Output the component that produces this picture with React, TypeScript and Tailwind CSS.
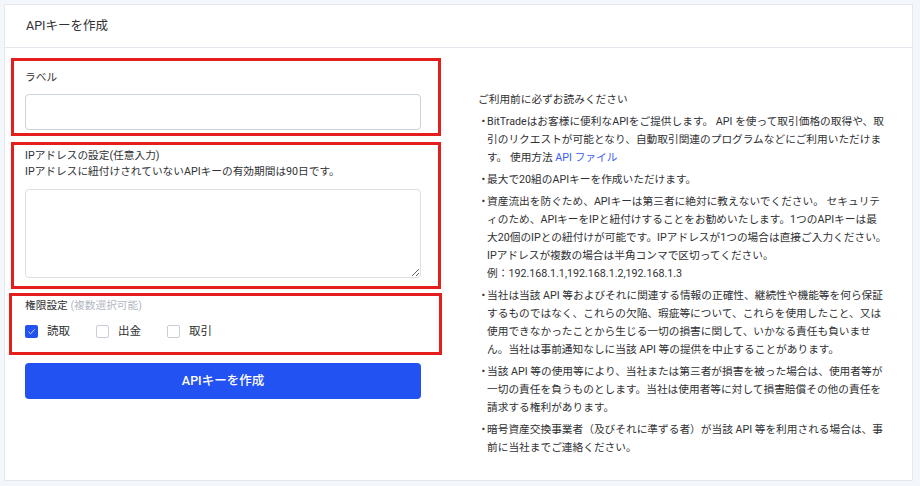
const notes: { lines: React.ReactNode[] }[] = [
  {
    lines: [
      "BitTradeはお客様に便利なAPIをご提供します。 API を使って取引価格の取得や、取",
      "引のリクエストが可能となり、自動取引関連のプログラムなどにご利用いただけま",
      <>
        す。 使用方法 <span className="text-[#3d5cf6]">API ファイル</span>
      </>,
    ],
  },
  { lines: ["最大で20組のAPIキーを作成いただけます。"] },
  {
    lines: [
      "資産流出を防ぐため、APIキーは第三者に絶対に教えないでください。 セキュリテ",
      "ィのため、APIキーをIPと紐付けすることをお勧めいたします。1つのAPIキーは最",
      "大20個のIPとの紐付けが可能です。IPアドレスが1つの場合は直接ご入力ください。",
      "IPアドレスが複数の場合は半角コンマで区切ってください。",
      "例：192.168.1.1,192.168.1.2,192.168.1.3",
    ],
  },
  {
    lines: [
      "当社は当該 API 等およびそれに関連する情報の正確性、継続性や機能等を何ら保証",
      "するものではなく、これらの欠陥、瑕疵等について、これらを使用したこと、又は",
      "使用できなかったことから生じる一切の損害に関して、いかなる責任も負いませ",
      "ん。当社は事前通知なしに当該 API 等の提供を中止することがあります。",
    ],
  },
  {
    lines: [
      "当該 API 等の使用等により、当社または第三者が損害を被った場合は、使用者等が",
      "一切の責任を負うものとします。当社は使用者等に対して損害賠償その他の責任を",
      "請求する権利があります。",
    ],
  },
  {
    lines: [
      "暗号資産交換事業者（及びそれに準ずる者）が当該 API 等を利用される場合は、事",
      "前に当社までご連絡ください。",
    ],
  },
];

function Check({ label, checked }: { label: string; checked?: boolean }) {
  return (
    <label className="flex items-center gap-[9px] h-[16px]">
      {checked ? (
        <span className="w-[13px] h-[13px] rounded-[2px] bg-[#2352f2] flex items-center justify-center">
          <svg width="9" height="9" viewBox="0 0 9 9" fill="none">
            <path d="M1.5 4.8 L3.6 6.8 L7.6 2.4" stroke="#c9d4ff" strokeWidth="1" />
          </svg>
        </span>
      ) : (
        <span className="w-[13px] h-[13px] rounded-[2px] border border-[#c8ced8] bg-white" />
      )}
      <span className="w-[22px] whitespace-nowrap">{label}</span>
    </label>
  );
}

export default function App() {
  return (
    <div
      className="w-[920px] h-[486px] bg-[#f3f6fa] pl-[4px] pt-[4px] text-[#303133]"
      style={{ fontFamily: 'Roboto, "Noto Sans CJK JP", sans-serif' }}
    >
      <div className="w-[909px] h-[477px] bg-white border border-[#e4e8ee]">
        <div className="h-[43px] border-b border-[#e4e8ee] flex items-center pl-[21px] text-[12.5px]">
          APIキーを作成
        </div>

        <div className="flex">
          {/* form */}
          <div className="ml-[6px] pt-[10px] w-[432px] text-[10.7px] leading-[16px]">
            <div className="w-[430px] border-[3px] border-[#e41d1d] pt-[9px] pl-[11px] pr-[17px] pb-[3px]">
              <div>ラベル</div>
              <input className="mt-[8px] block w-[396px] h-[36px] rounded-[4px] border border-[#cdd4de] outline-none" />
            </div>

            <div className="mt-[6px] w-[430px] border-[3px] border-[#e41d1d] pt-[3px] pl-[11px] pr-[17px] pb-[8px]">
              <div>IPアドレスの設定(任意入力)</div>
              <div>IPアドレスに紐付けされていないAPIキーの有効期間は90日です。</div>
              <textarea className="mt-[9px] block w-[396px] h-[89px] rounded-[4px] border border-[#dcdfe6] outline-none" />
            </div>

            <div className="mt-[4px] -ml-[2px] w-[433px] border-[3px] border-[#e41d1d] pt-[2px] pl-[13px] pb-[13px]">
              <div>
                権限設定 <span className="text-[#b3b8c2]">(複数選択可能)</span>
              </div>
              <div className="mt-[9px] flex gap-[27px] text-[11.5px]">
                <Check label="読取" checked />
                <Check label="出金" />
                <Check label="取引" />
              </div>
            </div>

            <button className="mt-[8px] ml-[14px] w-[396px] h-[36px] rounded-[4px] bg-[#2352f2] text-white text-[12.5px] font-medium">
              APIキーを作成
            </button>
          </div>

          {/* notes */}
          <div className="ml-[35px] pt-[43px] text-[10.7px] leading-[18px]">
            <div className="mb-[4px]">ご利用前に必ずお読みください</div>
            {notes.map((n, i) => (
              <div key={i} className="flex mb-[4px]">
                <span className="w-[9px] shrink-0">・</span>
                <div>
                  {n.lines.map((l, j) => (
                    <div key={j} className="whitespace-nowrap">
                      {l}
                    </div>
                  ))}
                </div>
              </div>
            ))}
          </div>
        </div>
      </div>
    </div>
  );
}
